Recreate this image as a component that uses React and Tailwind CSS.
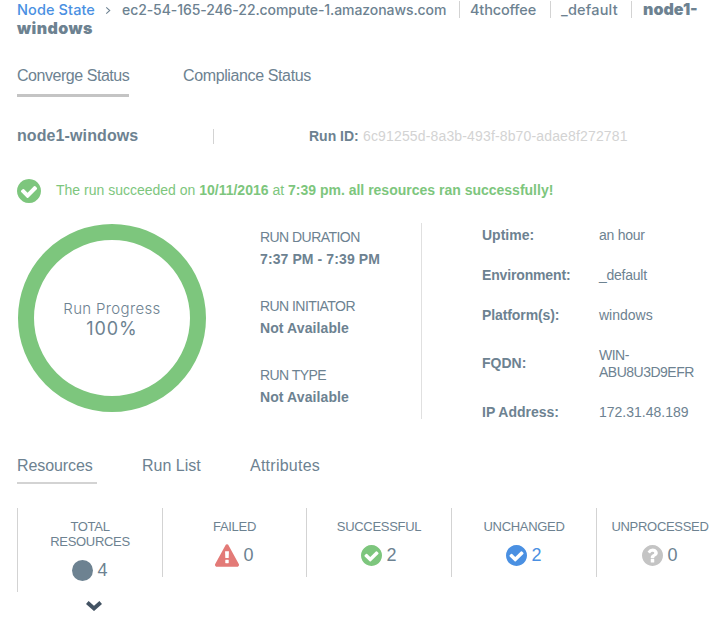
const CHECK =
  "M1412 734q0-28-18-46l-91-90q-19-19-45-19t-45 19l-408 407-226-226q-19-19-45-19t-45 19l-91 90q-18 18-18 46 0 27 18 45l362 362q19 19 45 19 27 0 46-19l543-543q18-18 18-45zm252 162q0 209-103 385.5t-279.5 279.5-385.5 103-385.5-103-279.5-279.5-103-385.5 103-385.5 279.5-279.5 385.5-103 385.5 103 279.5 279.5 103 385.5z";
const WARNING =
  "M1024 1375v-190q0-14-9.5-23.5t-22.5-9.5h-192q-13 0-22.5 9.5t-9.5 23.5v190q0 14 9.5 23.5t22.5 9.5h192q13 0 22.5-9.5t9.5-23.5zm-2-374l18-459q0-12-10-19-13-11-24-11h-220q-11 0-24 11-10 7-10 21l17 457q0 10 10 16.5t24 6.5h185q14 0 23.5-6.5t10.5-16.5zm-14-934l768 1408q35 63-2 126-17 29-46.5 46t-63.5 17h-1536q-34 0-63.5-17t-46.5-46q-37-63-2-126l768-1408q17-31 47-49t65-18 65 18 47 49z";
const QUESTION =
  "M1024 1376v-192q0-14-9-23t-23-9h-192q-14 0-23 9t-9 23v192q0 14 9 23t23 9h192q14 0 23-9t9-23zm256-672q0-88-55.5-163t-138.5-116-170-41q-243 0-371 213-15 24 8 42l132 100q7 6 19 6 16 0 25-12 53-68 86-92 34-24 86-24 48 0 85.5 26t37.5 59q0 38-20 61t-68 45q-63 28-115.5 86.5t-52.5 125.5v36q0 14 9 23t23 9h192q14 0 23-9t9-23q0-19 21.5-49.5t54.5-49.5q32-18 49-28.5t46-35 44.5-48 28-60.5 12.5-81zm384 192q0 209-103 385.5t-279.5 279.5-385.5 103-385.5-103-279.5-279.5-103-385.5 103-385.5 279.5-279.5 385.5-103 385.5 103 279.5 279.5 103 385.5z";

function Glyph({ d, className, viewBox = "128 128 1536 1536" }) {
  return (
    <svg viewBox={viewBox} className={className} fill="currentColor">
      <path d={d} />
    </svg>
  );
}

function Breadcrumb() {
  return (
    <header className="font-['Inter',sans-serif] text-[14.5px] leading-[19px] font-medium">
      <div className="flex h-[19px] whitespace-nowrap">
        <a className="w-[88px] text-[#4a90e2] tracking-[0.1px]">Node State</a>
        <svg viewBox="0 0 6 8" className="mt-[7px] h-[7px] w-[6px] fill-none stroke-[#6d8291] stroke-[1.2]">
          <path d="M1 0.5 5 4 1 7.5" />
        </svg>
        <span className="ml-[11px] w-[337px] text-[14px] tracking-[-0.08px]">ec2-54-165-246-22.compute-1.amazonaws.com</span>
        <span className="mt-px h-[17px] w-px bg-[#d3d3d3]" />
        <span className="ml-[10px] w-[80px] tracking-[-0.15px]">4thcoffee</span>
        <span className="mt-px h-[17px] w-px bg-[#d3d3d3]" />
        <span className="ml-[10px] w-[70px] tracking-[0.2px]">_default</span>
        <span className="mt-px h-[17px] w-px bg-[#d3d3d3]" />
        <span className="ml-[11px] text-[16px] font-black">node1-</span>
      </div>
      <div className="text-[16px] font-black tracking-[0.45px]">windows</div>
    </header>
  );
}

function RunFact({ label, value }) {
  return (
    <div className="h-[69px]">
      <div className="h-[22px] tracking-[-0.55px]">{label}</div>
      <div className="h-[22px] font-bold tracking-[0.1px]">{value}</div>
    </div>
  );
}

function NodeFact({ label, value, labelClass = "", valueClass = "", rowClass = "h-[40px]" }) {
  return (
    <div className={`flex items-center ${rowClass}`}>
      <dt className={`w-[117px] font-bold ${labelClass}`}>{label}</dt>
      <dd className={`whitespace-pre leading-[17px] ${valueClass}`}>{value}</dd>
    </div>
  );
}

function Stat({ label, count, icon, className, countClass = "" }) {
  return (
    <div className={`shrink-0 border-l border-[#d3d3d3] pt-[11px] text-center ${className}`}>
      <div className="whitespace-pre text-[13px] leading-[15px] tracking-[-0.3px]">{label}</div>
      <div className={`mt-[11px] flex h-[20px] items-center justify-center gap-[5px] text-[18px] leading-[20px] ${countClass}`}>
        {icon}
        <span className="-ml-px">{count}</span>
      </div>
    </div>
  );
}

export default function App() {
  return (
    <main className="h-[621px] w-[722px] overflow-hidden bg-white pl-[17px] font-['Liberation_Sans',Arial,sans-serif] text-[14px] text-[#6d8291]">
      <Breadcrumb />

      <nav className="mt-[28px] flex h-[31px] items-start gap-[54px] text-[16px] leading-[20px] whitespace-nowrap">
        <span className="h-[31px] w-[112px] border-b-[3px] border-[#c4c4c4] tracking-[-0.46px]">Converge Status</span>
        <span className="tracking-[-0.38px]">Compliance Status</span>
      </nav>

      <section className="mt-[29px] flex h-[20px] items-center whitespace-nowrap">
        <h1 className="w-[196px] text-[16px] font-bold tracking-[0.1px]">node1-windows</h1>
        <span className="h-[15px] w-px bg-[#d3d3d3]" />
        <span className="ml-[95px] w-[54px] font-bold">Run ID:</span>
        <span className="tracking-[0.15px] text-[#d3d3d3]">6c91255d-8a3b-493f-8b70-adae8f272781</span>
      </section>

      <section className="mt-[33px] flex h-[24px] items-center whitespace-nowrap text-[#7dc67d]">
        <Glyph d={CHECK} className="h-[24px] w-[24px]" />
        <p className="ml-[15px] pb-[2px]">
          The run succeeded on <b>10/11/2016</b> at <b>7:39 pm. all resources ran successfully!</b>
        </p>
      </section>

      <section className="mt-[20px] flex h-[196px]">
        <div className="mt-px ml-px flex h-[188px] w-[188px] flex-col items-center justify-center rounded-full border-[16px] border-[#7dc67d] pt-px font-['Inter',sans-serif]">
          <span className="text-[15px] leading-[20px] font-light tracking-[0.35px]">Run Progress</span>
          <span className="text-[18px] leading-[20px] tracking-[0.9px]">100%</span>
        </div>
        <div className="ml-[54px] w-[161px] pt-[3px] leading-[22px] whitespace-nowrap">
          <RunFact label="RUN DURATION" value="7:37 PM - 7:39 PM" />
          <RunFact label="RUN INITIATOR" value="Not Available" />
          <RunFact label="RUN TYPE" value="Not Available" />
        </div>
        <dl className="border-l border-[#e0e0e0] pl-[60px]">
          <div className="-mt-[8px]">
            <NodeFact label="Uptime:" value="an hour" valueClass="tracking-[-0.25px]" />
            <NodeFact label="Environment:" value="_default" labelClass="tracking-[-0.15px]" valueClass="tracking-[-0.25px]" />
            <NodeFact label="Platform(s):" value="windows" labelClass="tracking-[-0.1px]" />
            <NodeFact label="FQDN:" value={"WIN-\nABU8U3D9EFR"} rowClass="h-[57px]" valueClass="tracking-[-0.5px]" />
            <NodeFact label="IP Address:" value="172.31.48.189" />
          </div>
        </dl>
      </section>

      <nav className="mt-[36px] flex h-[29px] items-start text-[16px] leading-[22px] whitespace-nowrap">
        <span className="h-[29px] w-[80px] border-b-2 border-[#d3d3d3] tracking-[-0.1px]">Resources</span>
        <span className="ml-[45px] w-[108px]">Run List</span>
        <span className="tracking-[0.25px]">Attributes</span>
      </nav>

      <section className="mt-[24px] flex items-start">
        <Stat
          label={"TOTAL\nRESOURCES"}
          count="4"
          className="h-[84px] w-[145px]"
          icon={<span className="h-[21px] w-[21px] rounded-full bg-[#6d8291]" />}
        />
        <Stat
          label="FAILED"
          count="0"
          className="h-[69px] w-[144px]"
          icon={<Glyph d={WARNING} viewBox="0 0 1792 1664" className="h-[23px] w-[24px] text-[#e37a77]" />}
        />
        <Stat
          label="SUCCESSFUL"
          count="2"
          className="h-[69px] w-[145px]"
          icon={<Glyph d={CHECK} className="h-[21px] w-[21px] text-[#7dc67d]" />}
        />
        <Stat
          label="UNCHANGED"
          count="2"
          countClass="text-[#4a90e2]"
          className="h-[69px] w-[145px]"
          icon={<Glyph d={CHECK} className="h-[21px] w-[21px]" />}
        />
        <Stat
          label="UNPROCESSED"
          count="0"
          className="h-[69px] w-[127px]"
          icon={<Glyph d={QUESTION} className="h-[21px] w-[21px] text-[#c4c4c4]" />}
        />
      </section>

      <svg viewBox="0 0 16 10" className="mt-[9px] ml-[69px] h-[10px] w-[16px] fill-none stroke-[#435363] stroke-[4]">
        <path d="M1.3 1.5 8 7.4 14.7 1.5" />
      </svg>
    </main>
  );
}
